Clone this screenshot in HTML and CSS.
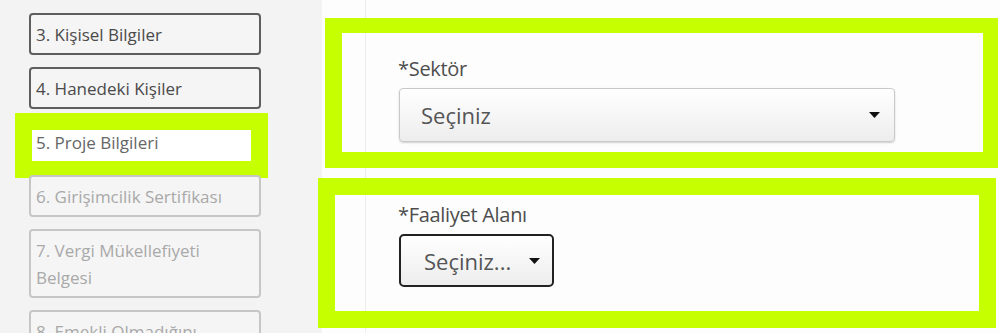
FILE: index.html
```html
<!DOCTYPE html>
<html lang="tr">
<head>
  <meta charset="UTF-8">
  <meta name="viewport" content="width=device-width, initial-scale=1.0">
  <title>Başvuru - Proje Bilgileri</title>
  <link rel="stylesheet" href="styles.css">
</head>
<body>
  <div class="steps">
    <div class="step done">3. Kişisel Bilgiler</div>
    <div class="step done">4. Hanedeki Kişiler</div>
    <div class="step active">5. Proje Bilgileri</div>
    <div class="step">6. Girişimcilik Sertifikası</div>
    <div class="step">7. Vergi Mükellefiyeti Belgesi</div>
    <div class="step">8. Emekli Olmadığını</div>
  </div>

  <div class="main">
    <div class="form-panel">
      <div class="form-group group-sector">
        <label class="field-label">*Sektör</label>
        <div class="select select-wide">
          <span>Seçiniz</span>
          <svg class="caret" width="11" height="6" viewBox="0 0 11 6"><path d="M0 0 H11 L5.5 6 Z" fill="#111"/></svg>
        </div>
      </div>

      <div class="form-group group-activity">
        <label class="field-label">*Faaliyet Alanı</label>
        <div class="select select-small">
          <span>Seçiniz...</span>
          <svg class="caret" width="11" height="6" viewBox="0 0 11 6"><path d="M0 0 H11 L5.5 6 Z" fill="#111"/></svg>
        </div>
      </div>
    </div>
  </div>
</body>
</html>
```

FILE: styles.css
```css
* {
  box-sizing: border-box;
}

body {
  margin: 0;
  height: 333px;
  overflow: hidden;
  display: flex;
  font-family: 'Open Sans', 'Noto Sans', sans-serif;
  background-color: #fdfdfd;
  color: #444;
}

/* left step list */
.steps {
  width: 322px;
  flex-shrink: 0;
  background-color: #f3f3f3;
  padding: 13px 0 0 29px;
  display: flex;
  flex-direction: column;
  gap: 12px;
}

.step {
  position: relative;
  width: 232px;
  padding: 6px 5px 5px;
  border: 2px solid #c6c6c6;
  border-radius: 4px;
  background-color: #f5f5f5;
  font-size: 17px;
  line-height: 27px;
  color: #a9a9a9;
}

.step.done {
  border-color: #5e5e5e;
  color: #4a4a4a;
}

.step.active {
  background-color: #fff;
  border-color: #fff;
  color: #666;
}

.step.active::after {
  content: "";
  position: absolute;
  left: -16px;
  top: -10px;
  right: -9px;
  bottom: -17px;
  border: 17px solid #c6ff00;
  pointer-events: none;
}

/* form area */
.main {
  flex: 1;
  padding-left: 43px;
}

.form-panel {
  height: 100%;
  border-left: 1px solid #ececec;
  padding: 57px 0 0 32px;
}

.form-group {
  position: relative;
}

.form-group::before {
  content: "";
  position: absolute;
  border: 16px solid #c6ff00;
  pointer-events: none;
}

.group-sector::before {
  left: -73px;
  right: 2px;
  top: -39px;
  bottom: -26px;
  border-width: 15px 15px 16px 17px;
}

.group-activity {
  margin-top: 61px;
}

.group-activity::before {
  left: -80px;
  right: 4px;
  top: -25px;
  bottom: -41px;
  border-width: 17px;
}

.field-label {
  display: block;
  font-size: 20px;
  line-height: 24px;
  letter-spacing: -0.3px;
  color: #4d4d4d;
  margin-bottom: 7px;
}

.select {
  display: flex;
  align-items: center;
  justify-content: space-between;
  margin-left: 1px;
  font-size: 22px;
  color: #555;
  background: linear-gradient(#ffffff, #ededed);
  border-radius: 4px;
}

.select-wide {
  width: 496px;
  height: 54px;
  padding: 0 14px 0 21px;
  border: 1px solid #c9c9c9;
  box-shadow: 0 1px 2px rgba(0, 0, 0, 0.18);
}

.select-small {
  width: 155px;
  height: 53px;
  padding: 0 12px 0 23px;
  border: 2px solid #222;
  border-radius: 5px;
}

.caret {
  display: block;
}
```
